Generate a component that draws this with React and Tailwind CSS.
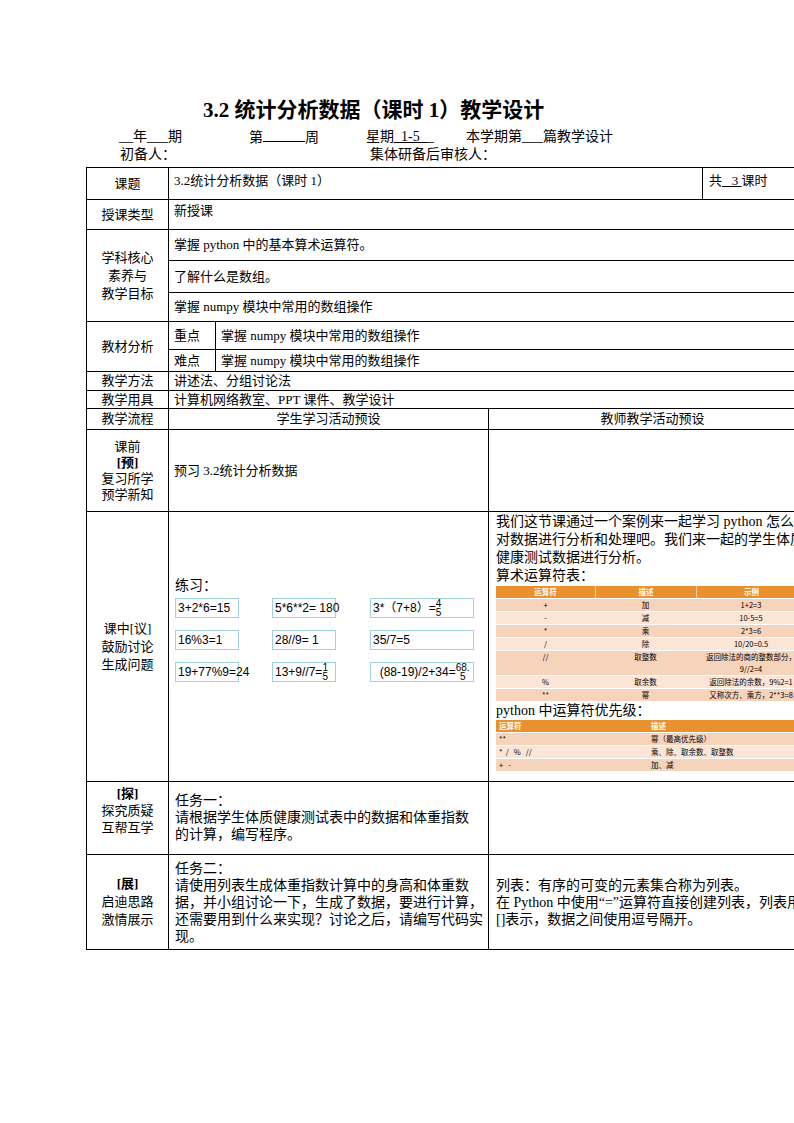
const F = { fontFamily: '"Liberation Serif","Noto Sans CJK SC",serif' };

function Box({ children, w }) {
  return (
    <div className={`h-[20px] border border-[#9fd3e0] flex items-center px-[2px] text-[12px] leading-none whitespace-nowrap overflow-visible ${w}`} style={{ fontFamily: '"Liberation Sans","Noto Sans CJK SC",sans-serif' }}>{children}</div>
  );
}

function Frac({ a, b }) {
  return <span className="inline-flex flex-col text-[10px] leading-[9px] items-center"><span>{a}</span><span>{b}</span></span>;
}

const ops = [
  ['+', '加', '1+2=3'],
  ['-', '减', '10-5=5'],
  ['*', '乘', '2*3=6'],
  ['/', '除', '10/20=0.5'],
  ['//', '取整数', '返回除法的商的整数部分，9//2=4'],
  ['%', '取余数', '返回除法的余数，9%2=1'],
  ['**', '幂', '又称次方、乘方，2**3=8'],
];

export default function App() {
  const td = 'border border-black';
  const T = `${td} align-top`;
  const M = `${td} align-middle`;
  return (
    <div className="relative w-[794px] h-[1123px] overflow-hidden bg-white text-black" style={F}>
      <div className="pt-[96px] pl-[203px] text-[21px] font-bold leading-[28px]">3.2 统计分析数据（课时 1）教学设计</div>
      <div className="flex text-[14px] leading-[18px] mt-[4px] pl-[119px]">
        <span className="w-[130px]">__年___期</span>
        <span className="w-[117px]">第<span className="inline-block w-[42px] border-b border-black h-[14px]"></span>周</span>
        <span className="w-[100px]">星期<span className="underline">_1-5_</span>_</span>
        <span>本学期第___篇教学设计</span>
      </div>
      <div className="flex text-[14px] leading-[16px] pl-[120px] mb-[4px]">
        <span className="w-[250px]">初备人：</span>
        <span>集体研备后审核人：</span>
      </div>
      <table className="ml-[86px] border-collapse table-fixed text-[13px] leading-[16px]" style={{ width: 730 }}>
        <colgroup><col style={{ width: 82 }} /><col style={{ width: 47 }} /><col style={{ width: 273 }} /><col style={{ width: 214 }} /><col style={{ width: 114 }} /></colgroup>
        <tbody>
          <tr className="h-[32px]">
            <td className={`${M} text-center`}>课题</td>
            <td className={`${T} pl-[5px] pt-[5px]`} colSpan={3}>3.2统计分析数据（课时 1）</td>
            <td className={`${T} pl-[6px] pt-[5px]`}>共<span className="underline">&nbsp;&nbsp;&nbsp;3&nbsp;</span>课时</td>
          </tr>
          <tr className="h-[30px]">
            <td className={`${M} text-center`}>授课类型</td>
            <td className={`${T} pl-[5px] pt-[3px]`} colSpan={4}>新授课</td>
          </tr>
          <tr className="h-[31px]">
            <td className={`${M} text-center leading-[18px]`} rowSpan={3}>学科核心<br />素养与<br />教学目标</td>
            <td className={`${M} pl-[5px]`} colSpan={4}>掌握 python 中的基本算术运算符。</td>
          </tr>
          <tr className="h-[32px]"><td className={`${M} pl-[5px]`} colSpan={4}>了解什么是数组。</td></tr>
          <tr className="h-[29px]"><td className={`${M} pl-[5px]`} colSpan={4}>掌握 numpy 模块中常用的数组操作</td></tr>
          <tr className="h-[28px]">
            <td className={`${M} text-center`} rowSpan={2}>教材分析</td>
            <td className={`${M} pl-[5px]`}>重点</td>
            <td className={`${M} pl-[5px]`} colSpan={3}>掌握 numpy 模块中常用的数组操作</td>
          </tr>
          <tr className="h-[22px]">
            <td className={`${M} pl-[5px]`}>难点</td>
            <td className={`${M} pl-[5px]`} colSpan={3}>掌握 numpy 模块中常用的数组操作</td>
          </tr>
          <tr className="h-[19px]">
            <td className={`${M} text-center`}>教学方法</td>
            <td className={`${M} pl-[5px]`} colSpan={4}>讲述法、分组讨论法</td>
          </tr>
          <tr className="h-[18px]">
            <td className={`${M} text-center`}>教学用具</td>
            <td className={`${M} pl-[5px]`} colSpan={4}>计算机网络教室、PPT 课件、教学设计</td>
          </tr>
          <tr className="h-[21px]">
            <td className={`${M} text-center`}>教学流程</td>
            <td className={`${M} text-center`} colSpan={2}>学生学习活动预设</td>
            <td className={`${M} text-center`} colSpan={2}>教师教学活动预设</td>
          </tr>
          <tr className="h-[82px]">
            <td className={`${M} text-center leading-[16px]`}>课前<br /><b>[预]</b><br />复习所学<br />预学新知</td>
            <td className={`${M} pl-[5px]`} colSpan={2}>预习 3.2统计分析数据</td>
            <td className={T} colSpan={2}></td>
          </tr>
          <tr className="h-[270px]">
            <td className={`${M} text-center leading-[18px]`}>课中[议]<br />鼓励讨论<br />生成问题</td>
            <td className={`${T} pl-[6px] pt-[66px]`} colSpan={2}>
              <div className="text-[14px] mb-[4px]">练习：</div>
              <div className="grid grid-cols-[97px_98px_104px] gap-y-[12px]">
                <Box w="w-[64px]">3+2*6=15</Box>
                <Box w="w-[64px]">5*6**2= 180</Box>
                <Box w="w-[104px]">3*（7+8）=<Frac a="4" b="5" /></Box>
                <Box w="w-[64px]">16%3=1</Box>
                <Box w="w-[64px]">28//9= 1</Box>
                <Box w="w-[104px]">35/7=5</Box>
                <Box w="w-[64px]">19+77%9=24</Box>
                <Box w="w-[64px]">13+9//7=<Frac a="1" b="5" /></Box>
                <Box w="w-[104px]">&nbsp;&nbsp;(88-19)/2+34=<Frac a="68." b="5" /></Box>
              </div>
            </td>
            <td className={`${T} pl-[7px] pt-[1px] overflow-hidden`} colSpan={2}>
              <div className="text-[14px] leading-[18px] whitespace-nowrap">我们这节课通过一个案例来一起学习 python 怎么<br />对数据进行分析和处理吧。我们来一起的学生体质<br />健康测试数据进行分析。<br />算术运算符表：</div>
              <div className="w-[310px] text-[7.5px] leading-[12px] mt-[1px]" style={{ fontFamily: '"Noto Sans CJK SC",sans-serif' }}>
                <div className="grid grid-cols-[99px_101px_110px] bg-[#e8912e] text-white font-bold text-center">
                  <span>运算符</span><span className="border-l border-white/60">描述</span><span className="border-l border-white/60">示例</span>
                </div>
                {ops.map((r, i) => (
                  <div key={i} className={`grid grid-cols-[99px_101px_110px] text-center ${i % 2 ? 'bg-[#fbe5d6]' : 'bg-[#f6d3bb]'} border-t border-white`}>
                    <span>{r[0]}</span><span>{r[1]}</span><span className="px-[2px]">{r[2]}</span>
                  </div>
                ))}
              </div>
              <div className="text-[14px] leading-[18px] mt-[1px]">python 中运算符优先级：</div>
              <div className="w-[310px] text-[7.5px] leading-[12px]" style={{ fontFamily: '"Noto Sans CJK SC",sans-serif' }}>
                <div className="grid grid-cols-[152px_158px] bg-[#e8912e] text-white font-bold">
                  <span className="pl-[3px]">运算符</span><span className="pl-[3px]">描述</span>
                </div>
                {[['**', '幂（最高优先级）'], ['*  /   %   //', '乘、除、取余数、取整数'], ['+   -', '加、减']].map((r, i) => (
                  <div key={i} className={`grid grid-cols-[152px_158px] whitespace-pre ${i % 2 ? 'bg-[#fbe5d6]' : 'bg-[#f6d3bb]'} border-t border-white`}>
                    <span className="pl-[3px]">{r[0]}</span><span className="pl-[3px]">{r[1]}</span>
                  </div>
                ))}
              </div>
            </td>
          </tr>
          <tr className="h-[73px]">
            <td className={`${T} text-center pt-[3px] leading-[17px]`}><b>[探]</b><br />探究质疑<br />互帮互学</td>
            <td className={`${T} pl-[6px] pr-[8px] pt-[10px] text-[14px] leading-[17px]`} colSpan={2}>任务一：<br />请根据学生体质健康测试表中的数据和体重指数的计算，编写程序。</td>
            <td className={T} colSpan={2}></td>
          </tr>
          <tr className="h-[95px]">
            <td className={`${M} text-center leading-[18px]`}><b>[展]</b><br />启迪思路<br />激情展示</td>
            <td className={`${M} pl-[6px] text-[14px] leading-[17px]`} colSpan={2}>任务二：<br />请使用列表生成体重指数计算中的身高和体重数据，并小组讨论一下，生成了数据，要进行计算，还需要用到什么来实现？讨论之后，请编写代码实现。</td>
            <td className={`${M} pl-[7px] text-[14px] leading-[17px] whitespace-nowrap overflow-hidden`} colSpan={2}>列表：有序的可变的元素集合称为列表。<br />在 Python 中使用“=”运算符直接创建列表，列表用<br />[]表示，数据之间使用逗号隔开。</td>
          </tr>
        </tbody>
      </table>
    </div>
  );
}
